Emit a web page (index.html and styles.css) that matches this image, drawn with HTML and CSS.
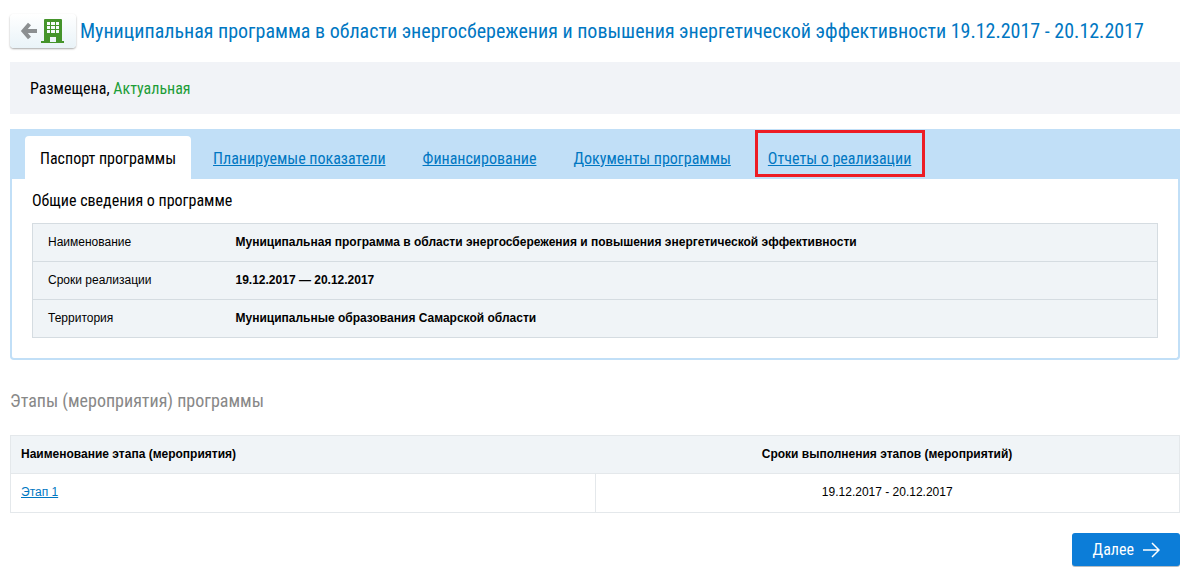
FILE: index.html
```html
<!DOCTYPE html>
<html lang="ru">
<head>
<meta charset="utf-8">
<meta name="viewport" content="width=device-width, initial-scale=1">
<title>Муниципальная программа</title>
<link rel="stylesheet" href="styles.css">
</head>
<body>
<main class="page">
  <header class="page-header">
    <button class="back-button" type="button" aria-label="Назад">
      <svg width="46" height="26" viewBox="0 0 46 26" aria-hidden="true">
        <path d="M9.500 6 3.500 13l6 7M4 13H17" fill="none" stroke="#8c8f91" stroke-width="4"/>
        <path fill="#45942b" fill-rule="evenodd" d="M25 1h16q1 0 1 1v21h2v2H21v-2h3V2q0-1 1-1zM27 4v3h3V4zm4 0v3h4V4zm5 0v3h3V4zM27 8v3h3V8zm4 0v3h4V8zm5 0v3h3V8zM27 12v3h3v-3zm4 0v3h4v-3zm5 0v3h3v-3zM30 19v5h6v-5z"/>
      </svg>
    </button>
    <h1 class="page-title">Муниципальная программа в области энергосбережения и повышения энергетической эффективности 19.12.2017 - 20.12.2017</h1>
  </header>

  <p class="status">Размещена, <span class="status-current">Актуальная</span></p>

  <section class="card">
    <nav class="tabs">
      <a class="tab tab-active" href="#passport" aria-current="page">Паспорт программы</a>
      <a class="tab" href="#indicators">Планируемые показатели</a>
      <a class="tab" href="#funding">Финансирование</a>
      <a class="tab" href="#documents">Документы программы</a>
      <a class="tab tab-marked" href="#reports">Отчеты о реализации</a>
    </nav>
    <div class="card-body" id="passport">
      <h2 class="card-title">Общие сведения о программе</h2>
      <table class="details">
        <tbody>
          <tr><th scope="row">Наименование</th><td>Муниципальная программа в области энергосбережения и повышения энергетической эффективности</td></tr>
          <tr><th scope="row">Сроки реализации</th><td>19.12.2017 — 20.12.2017</td></tr>
          <tr><th scope="row">Территория</th><td>Муниципальные образования Самарской области</td></tr>
        </tbody>
      </table>
    </div>
  </section>

  <h2 class="section-title">Этапы (мероприятия) программы</h2>
  <table class="stages">
    <thead>
      <tr><th scope="col">Наименование этапа (мероприятия)</th><th class="dates" scope="col">Сроки выполнения этапов (мероприятий)</th></tr>
    </thead>
    <tbody>
      <tr><td><a href="#stage-1">Этап 1</a></td><td class="dates">19.12.2017 - 20.12.2017</td></tr>
    </tbody>
  </table>

  <div class="actions">
    <button class="next-button" type="button">Далее
      <svg width="18" height="16" viewBox="0 0 18 16" aria-hidden="true"><path d="M1 8h16M10 1l7 7-7 7" fill="none" stroke="#fff" stroke-width="1.500"/></svg>
    </button>
  </div>
</main>
</body>
</html>
```
FILE: styles.css
```css
* { box-sizing: border-box; }

body {
  margin: 0;
  background: #fff;
  color: #000;
  font: 12px/18px "Liberation Sans", Arial, sans-serif;
}

h1, h2, p { margin: 0; font-weight: 400; }

a { color: #0077c2; }

.page { padding: 14px 7px 16px 10px; }

.page-title, .status, .tabs, .card-title, .section-title, .next-button {
  font-family: "Roboto Condensed", Roboto, sans-serif;
}

.page-header { display: flex; align-items: center; gap: 4px; }

.back-button {
  display: flex;
  flex: none;
  align-items: center;
  padding: 4px 10px;
  border: 0;
  border-radius: 4px;
  background: linear-gradient(#fff, #e9f3f8);
  box-shadow: 0 1px 2px 0 #a8a8a8;
}

.page-title { color: #0077c2; font-size: 20px; line-height: 24px; }

.status {
  margin-top: 14px;
  padding: 15px 20px 13px;
  background: #f1f3f7;
  font-size: 16px;
  line-height: 24px;
}

.status-current { color: #1d9d37; }

.card {
  margin-top: 15px;
  border: 2px solid #c1dff7;
  border-top: 0;
  border-radius: 0 0 4px 4px;
}

.tabs {
  display: flex;
  gap: 7px;
  padding: 7px 13px 0;
  background: #c1dff7;
  font-size: 16px;
  line-height: 23px;
}

.tab { position: relative; padding: 11px 15px 9px; }

.tab-active {
  border-radius: 4px 4px 0 0;
  background: #fff;
  color: #000;
  text-decoration: none;
}

.tab-marked::after {
  content: "";
  position: absolute;
  inset: -6px 1px 2px 2px;
  border: 3px solid #ed1c24;
}

.card-body { padding: 10px 20px 20px; }

.card-title { font-size: 16px; line-height: 24px; }

.details, .stages { width: 100%; border-collapse: collapse; }

.details { margin-top: 10px; background: #f0f4f7; }

.details tr { border: 1px solid #d5dce1; }

.details th, .details td { padding: 9px 15px 10px; text-align: left; }

.details th { width: 188px; font-weight: 400; }

.details td { font-weight: 700; }

.section-title {
  margin-top: 28px;
  color: #888;
  font-size: 18px;
  line-height: 26px;
}

.stages { margin-top: 21px; table-layout: fixed; }

.stages th, .stages td {
  padding: 9px 10px 11px;
  border: 1px solid #e4e8eb;
  text-align: left;
}

.stages th {
  padding-bottom: 10px;
  border-right: 0;
  border-left: 0;
  background: #f0f4f7;
}

.stages thead tr { border: 1px solid #e4e8eb; }

.stages .dates { text-align: center; }

.actions { display: flex; justify-content: flex-end; margin-top: 20px; }

.next-button {
  display: flex;
  align-items: center;
  gap: 8px;
  padding: 5px 20px 4px 21px;
  border: 0;
  border-radius: 3px;
  background: #0c7dd8;
  box-shadow: 0 1px 0 #b5bcc2;
  color: #fff;
  font-size: 16px;
  line-height: 24px;
}
```
